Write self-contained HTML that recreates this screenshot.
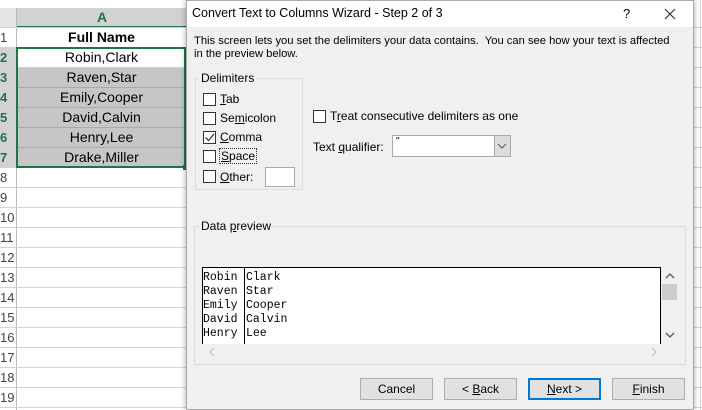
<!DOCTYPE html>
<html><head><style>
*{margin:0;padding:0;box-sizing:border-box}
body{width:702px;height:410px;overflow:hidden;background:#fff;position:relative;font-family:"Liberation Sans",sans-serif;font-size:12px;color:#000}
.a{position:absolute}
.rl{position:absolute;left:0;width:702px;height:1px;background:#d4d4d4}
.rn{position:absolute;left:0;width:16px;text-align:left;font-size:13px;color:#444}
.cell{position:absolute;left:17px;width:169px;height:19px;text-align:center;font-size:14px;line-height:19px}
.cb{position:absolute;width:13px;height:13px;border:1px solid #333;background:#fff}
.lbl{position:absolute;font-size:12px;color:#000;white-space:nowrap}
.btn{position:absolute;top:378px;width:73px;height:22px;background:#e1e1e1;border:1px solid #adadad;text-align:center;line-height:20px;font-size:12px}
.mono{font-family:"Liberation Mono",monospace;font-size:11.5px;line-height:14px}
</style></head><body>
<div class="a" style="left:0;top:8px;width:188px;height:20px;background:#e6e6e6"></div>
<div class="a" style="left:17px;top:8px;width:170px;height:20px;background:#d2d2d2;border-bottom:2px solid #217346;color:#217346;font-weight:bold;font-size:14px;text-align:center;line-height:18px">A</div>
<div class="a" style="left:16px;top:8px;width:1px;height:402px;background:#bbb"></div>
<div class="rl" style="top:27px"></div><div class="rl" style="top:47px"></div><div class="rl" style="top:67px"></div><div class="rl" style="top:87px"></div><div class="rl" style="top:107px"></div><div class="rl" style="top:127px"></div><div class="rl" style="top:147px"></div><div class="rl" style="top:167px"></div><div class="rl" style="top:187px"></div><div class="rl" style="top:207px"></div><div class="rl" style="top:227px"></div><div class="rl" style="top:247px"></div><div class="rl" style="top:267px"></div><div class="rl" style="top:287px"></div><div class="rl" style="top:307px"></div><div class="rl" style="top:327px"></div><div class="rl" style="top:347px"></div><div class="rl" style="top:367px"></div><div class="rl" style="top:387px"></div><div class="rl" style="top:407px"></div>
<div class="a" style="left:17px;top:68px;width:169px;height:100px;background:#c6c6c6"></div>
<div class="rl" style="top:87px;left:17px;width:169px;background:#aaa"></div><div class="rl" style="top:107px;left:17px;width:169px;background:#aaa"></div><div class="rl" style="top:127px;left:17px;width:169px;background:#aaa"></div><div class="rl" style="top:147px;left:17px;width:169px;background:#aaa"></div>
<div class="cell" style="top:28px;font-weight:bold">Full Name</div>
<div class="cell" style="top:48px">Robin,Clark</div>
<div class="cell" style="top:68px">Raven,Star</div>
<div class="cell" style="top:88px">Emily,Cooper</div>
<div class="cell" style="top:108px">David,Calvin</div>
<div class="cell" style="top:128px">Henry,Lee</div>
<div class="cell" style="top:148px">Drake,Miller</div>
<div class="a" style="left:16px;top:47px;width:170px;height:121px;border:2px solid #217346"></div>
<div class="a" style="left:183px;top:165px;width:5px;height:5px;background:#217346"></div>
<div class="a" style="left:0;top:48px;width:16px;height:120px;background:#d2d2d2"></div>
<div class="rn" style="top:30px">1</div>
<div class="rn" style="top:50px;color:#217346;font-weight:bold">2</div>
<div class="rn" style="top:70px;color:#217346;font-weight:bold">3</div>
<div class="rn" style="top:90px;color:#217346;font-weight:bold">4</div>
<div class="rn" style="top:110px;color:#217346;font-weight:bold">5</div>
<div class="rn" style="top:130px;color:#217346;font-weight:bold">6</div>
<div class="rn" style="top:150px;color:#217346;font-weight:bold">7</div>
<div class="rn" style="top:170px">8</div><div class="rn" style="top:190px">9</div><div class="rn" style="top:210px">10</div><div class="rn" style="top:230px">11</div><div class="rn" style="top:250px">12</div><div class="rn" style="top:270px">13</div><div class="rn" style="top:290px">14</div><div class="rn" style="top:310px">15</div><div class="rn" style="top:330px">16</div><div class="rn" style="top:350px">17</div><div class="rn" style="top:370px">18</div><div class="rn" style="top:390px">19</div>
<div class="a" style="left:700px;top:0;width:1px;height:410px;background:#d4d4d4"></div>
<div class="a" style="left:186px;top:0;width:508px;height:410px;background:#f0f0f0;box-shadow:0 0 6px rgba(0,0,0,.35);border:1px solid #aaa"></div>
<div class="a" style="left:187px;top:1px;width:506px;height:26px;background:#fff"></div>
<div class="lbl" style="left:192px;top:6px;font-size:12.5px">Convert Text to Columns Wizard - Step 2 of 3</div>
<div class="lbl" style="left:623px;top:6px;font-size:13px">?</div>
<svg class="a" style="left:664px;top:8px" width="12" height="12"><path d="M1 1 L11 11 M11 1 L1 11" stroke="#222" stroke-width="1"/></svg>
<div class="lbl" style="left:194px;top:35px;font-size:11.2px">This screen lets you set the delimiters your data contains.&nbsp; You can see how your text is affected</div>
<div class="lbl" style="left:194px;top:48px;font-size:11.2px">in the preview below.</div>
<div class="a" style="left:195px;top:78px;width:108px;height:112px;border:1px solid #dcdcdc"></div>
<div class="lbl" style="left:199px;top:71px;background:#f0f0f0;padding:0 2px">Delimiters</div>
<div class="cb" style="left:203px;top:93px"></div><div class="lbl" style="left:220px;top:92px"><u>T</u>ab</div>
<div class="cb" style="left:203px;top:112px"></div><div class="lbl" style="left:220px;top:111px">Se<u>m</u>icolon</div>
<div class="cb" style="left:203px;top:131px"><svg width="11" height="11" style="position:absolute;left:0;top:0"><path d="M1.5 5.5 L4.5 8.5 L10 2" stroke="#222" fill="none" stroke-width="1.1"/></svg></div><div class="lbl" style="left:220px;top:130px"><u>C</u>omma</div>
<div class="cb" style="left:203px;top:150px"></div><div class="lbl" style="left:219px;top:148px;border:1px dotted #333;padding:0 1px"><u>S</u>pace</div>
<div class="cb" style="left:203px;top:170px"></div><div class="lbl" style="left:220px;top:170px"><u>O</u>ther:</div>
<div class="a" style="left:265px;top:167px;width:30px;height:20px;background:#fff;border:1px solid #aaa"></div>
<div class="cb" style="left:313px;top:110px"></div><div class="lbl" style="left:330px;top:109px">T<u>r</u>eat consecutive delimiters as one</div>
<div class="lbl" style="left:313px;top:140px">Text <u>q</u>ualifier:</div>
<div class="a" style="left:392px;top:135px;width:119px;height:22px;background:#fff;border:1px solid #aaa"></div>
<div class="lbl" style="left:396px;top:136px;font-size:10px">"</div>
<div class="a" style="left:494px;top:136px;width:16px;height:20px;background:#dcdcdc;border-left:1px solid #aaa"></div>
<svg class="a" style="left:497px;top:143px" width="10" height="6"><path d="M1 1 L5 5 L9 1" stroke="#555" fill="none"/></svg>
<div class="a" style="left:194px;top:226px;width:492px;height:139px;border:1px solid #dcdcdc"></div>
<div class="lbl" style="left:199px;top:219px;background:#f0f0f0;padding:0 2px">Data <u>p</u>review</div>
<div class="a" style="left:202px;top:267px;width:459px;height:77px;background:#fff;border:1px solid #000;border-bottom:none"></div>
<div class="a" style="left:244px;top:268px;width:1px;height:76px;background:#000"></div>
<div class="a mono" style="left:203px;top:271px">Robin<br>Raven<br>Emily<br>David<br>Henry</div>
<div class="a mono" style="left:246px;top:271px">Clark<br>Star<br>Cooper<br>Calvin<br>Lee</div>
<svg class="a" style="left:665px;top:273px" width="10" height="6"><path d="M1 5 L5 1 L9 5" stroke="#555" fill="none" stroke-width="1.3"/></svg>
<div class="a" style="left:662px;top:284px;width:15px;height:16px;background:#cdcdcd"></div>
<svg class="a" style="left:665px;top:332px" width="10" height="6"><path d="M1 1 L5 5 L9 1" stroke="#555" fill="none" stroke-width="1.3"/></svg>
<svg class="a" style="left:209px;top:347px" width="6" height="10"><path d="M5 1 L1 5 L5 9" stroke="#bbb" fill="none"/></svg>
<svg class="a" style="left:651px;top:347px" width="6" height="10"><path d="M1 1 L5 5 L1 9" stroke="#bbb" fill="none"/></svg>
<div class="btn" style="left:360px">Cancel</div>
<div class="btn" style="left:444px">&lt; <u>B</u>ack</div>
<div class="btn" style="left:528px;border:2px solid #0078d7;line-height:18px"><u>N</u>ext &gt;</div>
<div class="btn" style="left:612px"><u>F</u>inish</div>
</body></html>
